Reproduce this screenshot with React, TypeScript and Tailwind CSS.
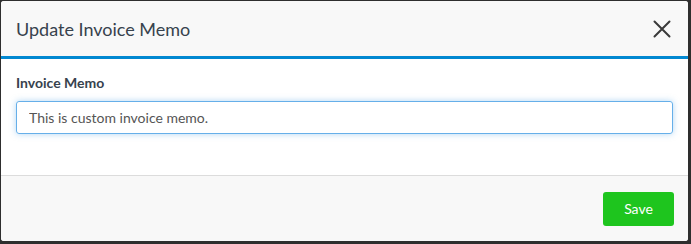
export default function App() {
  return (
    <div className="h-[244px] w-[691px] bg-[#2e2e2e] pl-px pt-px pr-[3px] pb-[3px] font-['Lato',sans-serif]">
      <div className="flex h-full flex-col overflow-hidden rounded-[3px] bg-white">
        {/* HEADER */}
        <div className="flex h-[58px] shrink-0 items-center justify-between border-b-[3px] border-[#0288d1] bg-[#f8f8f8] pl-[15px] pr-[17px]">
          <h2 className="text-[18px] leading-none text-[#37424d]">Update Invoice Memo</h2>
          <button className="text-[#3a3a3a]">
            <svg width="18" height="18" viewBox="0 0 18 18" fill="none" stroke="currentColor" strokeWidth="2" strokeLinecap="round">
              <path d="M1.5 1.5 16.5 16.5M16.5 1.5 1.5 16.5" />
            </svg>
          </button>
        </div>

        {/* BODY */}
        <div className="flex-1 px-[15px] pt-[14px]">
          <label className="block text-[14px] font-bold leading-[20px] text-[#37424d]">
            Invoice Memo
          </label>
          <input
            defaultValue="This is custom invoice memo."
            className="mt-[8px] h-[33px] w-full rounded-[3px] border border-[#66afe9] px-3 text-[14px] text-[#555] shadow-[0_0_6px_rgba(102,175,233,0.5)] outline-none"
          />
        </div>

        {/* FOOTER */}
        <div className="flex h-[66px] shrink-0 items-center justify-end border-t border-[#dcdcdc] bg-[#f8f8f8] pr-[14px]">
          <button className="h-[34px] w-[71px] rounded-[3px] bg-[#1ec51e] text-[14px] text-white">
            Save
          </button>
        </div>
      </div>
    </div>
  );
}
